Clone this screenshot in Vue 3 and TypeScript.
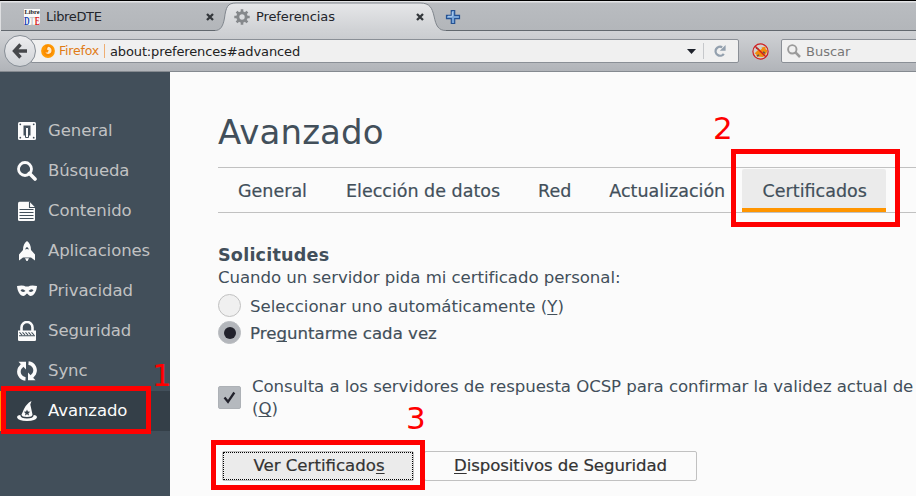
<script setup lang="ts">
import { ref } from 'vue'

interface Category {
  id: string
  label: string
}

const categories: Category[] = [
  { id: 'general', label: 'General' },
  { id: 'search', label: 'Búsqueda' },
  { id: 'content', label: 'Contenido' },
  { id: 'apps', label: 'Aplicaciones' },
  { id: 'privacy', label: 'Privacidad' },
  { id: 'security', label: 'Seguridad' },
  { id: 'sync', label: 'Sync' },
  { id: 'advanced', label: 'Avanzado' },
]
const tabs: string[] = ['General', 'Elección de datos', 'Red', 'Actualización', 'Certificados']

const category = ref('advanced')
const tab = ref('Certificados')
const request = ref<'auto' | 'ask'>('ask')
const ocsp = ref(true)
</script>

<template>
  <div class="window">
    <header class="tabstrip">
      <div class="btab btab-first">
        <svg class="favicon" width="16" height="16" viewBox="0 0 16 16">
          <rect width="16" height="16" fill="#fafafa" />
          <text x="0.5" y="5.2" font-size="5.5" font-weight="bold" textLength="15" lengthAdjust="spacingAndGlyphs" fill="#222" font-family="Liberation Serif, serif">Libre</text>
          <text x="0" y="15.600" font-size="11.500" font-weight="bold" textLength="16" lengthAdjust="spacingAndGlyphs" font-family="Liberation Serif, serif"><tspan fill="#1c46b4">D</tspan><tspan fill="#c8c8c8">T</tspan><tspan fill="#d92424">E</tspan></text>
        </svg>
        <span class="btab-title title-libre">LibreDTE</span>
        <svg class="close" width="8" height="8" viewBox="0 0 8 8"><path d="M1 1L7 7M7 1L1 7" stroke="#33373b" stroke-width="2.3" /></svg>
      </div>
      <div class="btab btab-active">
        <svg class="tab-shape" width="236" height="30" viewBox="0 0 236 30">
          <defs>
            <linearGradient id="tabfill" x1="0" y1="0" x2="0" y2="1">
              <stop offset="0" stop-color="#e6e7e9" />
              <stop offset="1" stop-color="#cfd1d4" />
            </linearGradient>
          </defs>
          <path d="M0 30V29.500C5 29.500 8 26 9.500 17C11 6 12.500 2 21 2H205C215 2 217 7 219 15C221 25 223.500 29.500 231 29.500V30Z" fill="url(#tabfill)" />
          <path d="M0 29.500C5 29.500 8 26 9.500 17C11 6 12.500 2 21 2H205C215 2 217 7 219 15C221 25 223.500 29.500 231 29.500" fill="none" stroke="#80868d" />
        </svg>
        <svg class="gear" width="16" height="16" viewBox="0 0 16 16">
          <circle cx="8" cy="8" r="4.200" fill="none" stroke="#85888b" stroke-width="3" />
          <g stroke="#85888b" stroke-width="2.600"><path d="M8 .3V3M8 13V15.700M.3 8H3M13 8H15.700M2.600 2.600L4.500 4.500M11.500 11.500L13.400 13.400M13.400 2.600L11.500 4.500M4.500 11.500L2.600 13.400" /></g>
        </svg>
        <span class="btab-title title-pref">Preferencias</span>
        <svg class="close" width="8" height="8" viewBox="0 0 8 8"><path d="M1 1L7 7M7 1L1 7" stroke="#33373b" stroke-width="2.3" /></svg>
      </div>
      <svg class="newtab" width="16" height="16" viewBox="0 0 16 16"><path d="M6.300 1.500H9.700V6.300H14.500V9.700H9.700V14.500H6.300V9.700H1.500V6.300H6.300Z" fill="#78a5d8" stroke="#255293" stroke-width="1.200" /><path d="M7.300 3V7.300H3" fill="none" stroke="#b5d0ee" /></svg>
    </header>

    <nav class="toolbar">
      <button class="back" aria-label="Atrás">
        <svg width="16" height="16" viewBox="0 0 16 16"><path d="M8.500 1.500L2.500 8L8.500 14.500M3 8H15" fill="none" stroke="#46484b" stroke-width="3.400" /></svg>
      </button>
      <div class="urlbar">
        <svg class="fox" width="14" height="14" viewBox="0 0 14 14">
          <circle cx="7" cy="7" r="6.900" fill="#ff9a05" />
          <path d="M4 1.500C7 .5 11.500 2 12 6.500C12.300 10 9.500 12.300 6.500 12C3.500 11.700 2 9 2.500 6C4 6 5.500 5.500 5 3.500Z" fill="#f98b00" />
          <path d="M7 2.700C10 3 11 5.500 10.300 7.800C9.500 10.300 6 10.700 4.300 8.600L6.700 8.400L7.700 6.300L5.800 5.500Z" fill="#ffe9c7" />
        </svg>
        <span class="brand">Firefox</span>
        <span class="url">about:preferences#advanced</span>
        <svg class="drop" width="9" height="5" viewBox="0 0 9 5"><path d="M0 0H9L4.500 5Z" fill="#1e222b" /></svg>
        <span class="sep"></span>
        <svg class="reload" width="12" height="12" viewBox="0 0 12 12"><path d="M9.800 8.800A4.500 4.500 0 1 1 8.200 2.200" fill="none" stroke="#93a0ae" stroke-width="2.300" /><path d="M11.600 0V5.800H5.800Z" fill="#93a0ae" /></svg>
      </div>
      <svg class="noscript" width="17" height="17" viewBox="0 0 17 17">
        <circle cx="8.500" cy="8.500" r="7.500" fill="#d2d0cc" />
        <path d="M4.500 8.500L7 6L8.500 7L10 5.500L9.500 4.500L13.500 3.500L13.500 6L15.500 7.500L14 11L11 14L5 13.500L4 11L2.500 10.500Z" fill="#f28c0d" />
        <path d="M4 5L6.500 6M7 12L5 13M11 9L13 10" stroke="#65564a" stroke-width="1.400" />
        <circle cx="8.500" cy="8.500" r="7.600" fill="none" stroke="#cf1d20" stroke-width="1.200" />
        <path d="M3.200 3.200L13.800 13.800" stroke="#cf1d20" stroke-width="1.400" />
      </svg>
      <div class="searchbar">
        <svg width="14" height="14" viewBox="0 0 14 14"><circle cx="5.300" cy="5.300" r="4.200" fill="none" stroke="#9b9b9b" stroke-width="1.900" /><path d="M8.200 8.200L13 13" stroke="#9b9b9b" stroke-width="2.500" /></svg>
        <span>Buscar</span>
      </div>
    </nav>

    <div class="body">
      <aside class="sidebar">
        <div v-for="c in categories" :key="c.id" class="cat" :class="{ selected: c.id === category }" @click="category = c.id">
          <svg class="cat-icon" width="20" height="20" viewBox="0 0 20 20" fill="#fbfbfb">
            <template v-if="c.id === 'general'">
              <rect x="1" y="1" width="18" height="18" rx="1.500" />
              <path d="M6.500 4.500H13.500V14.500H6.500Z" fill="#424f5a" />
              <path d="M8.500 6.500H11.500V16.500H8.500Z" stroke="#424f5a" stroke-width="1" />
              <g fill="#424f5a"><circle cx="3.300" cy="3.300" r=".9" /><circle cx="16.700" cy="3.300" r=".9" /><circle cx="3.300" cy="16.700" r=".9" /><circle cx="16.700" cy="16.700" r=".9" /></g>
            </template>
            <template v-else-if="c.id === 'search'">
              <circle cx="8" cy="8" r="6.500" fill="none" stroke="#fbfbfb" stroke-width="2.800" />
              <path d="M12.300 12.300L18 18" stroke="#fbfbfb" stroke-width="3.600" stroke-linecap="round" />
            </template>
            <template v-else-if="c.id === 'content'">
              <path d="M2.500 .7H12.500L18 6.200V18.500Q18 20 16.500 20H2.500Q1 20 1 18.500V2.200Q1 .7 2.500 .7Z" />
              <path d="M12.500 1V6.500H18M2.500 8.500H16.500M2.500 11.500H16.500M2.500 14.500H16.500M2.500 17.500H16.500" fill="none" stroke="#424f5a" stroke-width="1.100" />
            </template>
            <template v-else-if="c.id === 'apps'">
              <path d="M10 0C12.500 1.500 14 5 14 9L18 13.500V19.500L14 16.500H6L2 19.500V13.500L6 9C6 5 7.500 1.500 10 0Z" />
              <path d="M8 17.300H12L10 21Z" />
              <path d="M8 8.500Q10 3.500 12 8.500Q10 7.500 8 8.500Z" fill="#424f5a" />
            </template>
            <template v-else-if="c.id === 'privacy'">
              <path d="M0 5Q4 4 7 4.700Q10 6.500 13 4.700Q16 4 20 5C19.500 10.500 17 15 13.500 15C11.500 15 11 12.500 10 12.500C9 12.500 8.500 15 6.500 15C3 15 .5 10.500 0 5Z" />
              <path d="M3.500 9.500Q5.500 7 8.500 10Q5.500 12 3.500 9.500ZM16.500 9.500Q14.500 7 11.500 10Q14.500 12 16.500 9.500Z" fill="#424f5a" />
            </template>
            <template v-else-if="c.id === 'security'">
              <path d="M4.500 10V6.500A5.500 5.500 0 0 1 15.500 6.500V10" fill="none" stroke="#fbfbfb" stroke-width="2.600" />
              <path d="M1 9.500H19V18.700Q19 20 17.700 20H2.300Q1 20 1 18.700Z" />
              <path d="M2.500 11.300L5 14M5.500 11.300L8 14M8.500 11.300L11 14M11.500 11.300L14 14M14.500 11.300L17 14M2 14.700H18" stroke="#424f5a" stroke-width="1.100" />
            </template>
            <template v-else-if="c.id === 'sync'">
              <path d="M8.500 18C3 17.500 .5 11.500 2.800 7.200L5.500 4" fill="none" stroke="#fbfbfb" stroke-width="3.600" />
              <path d="M1.500 .8H9V8.500Z" />
              <path d="M11.500 2C17 2.500 19.500 8.500 17.200 12.800L14.500 16" fill="none" stroke="#fbfbfb" stroke-width="3.600" />
              <path d="M18.500 19.200H11V11.500Z" />
            </template>
            <template v-else>
              <path d="M14.500 0L13.300 3.500L15.500 13.500Q15.600 16 10 16Q4.500 16 4.500 13.500C6.500 10.500 7 4 14.500 0Z" />
              <path d="M3.300 14Q3.500 17.500 10 17.500Q16.500 17.500 16.700 14Q20 14.500 20 16.200Q19 20 10 20Q1 20 0 16.200Q0 14.500 3.300 14Z" />
              <path d="M10 8.500L10.900 10.600L13.200 10.800L11.500 12.300L12 14.500L10 13.300L8 14.500L8.500 12.300L6.800 10.800L9.100 10.600Z" fill="#343f48" />
            </template>
          </svg>
          <span>{{ c.label }}</span>
        </div>
      </aside>

      <main class="pane">
        <h1>Avanzado</h1>
        <div class="tabs">
          <button v-for="t in tabs" :key="t" class="tab" :class="{ on: t === tab }" @click="tab = t">{{ t }}</button>
        </div>
        <h2>Solicitudes</h2>
        <p class="desc">Cuando un servidor pida mi certificado personal:</p>
        <div class="radio-row" @click="request = 'auto'">
          <span class="radio" :class="{ checked: request === 'auto' }"></span>
          <span class="auto-label">Seleccionar uno automáticamente (<u>Y</u>)</span>
        </div>
        <div class="radio-row" @click="request = 'ask'">
          <span class="radio" :class="{ checked: request === 'ask' }"></span>
          <span class="ask-label">Pre<u>g</u>untarme cada vez</span>
        </div>
        <div class="check-row" @click="ocsp = !ocsp">
          <span class="check"><svg v-if="ocsp" width="13" height="13" viewBox="0 0 13 13"><path d="M1.500 6.500L5 10.800L11.300 1.500" fill="none" stroke="#22222c" stroke-width="2.300" /></svg></span>
          <span class="check-label">Consulta a los servidores de respuesta OCSP para confirmar la validez actual de<br />(<u>Q</u>)</span>
        </div>
        <div class="buttons">
          <button class="btn focused">Ver Certificado<u>s</u></button>
          <button class="btn devices"><u>D</u>ispositivos de Seguridad</button>
        </div>
      </main>
    </div>

    <div class="box box-1"></div>
    <div class="box box-2"></div>
    <div class="box box-3"></div>
    <span class="num num-1">1</span>
    <span class="num num-2">2</span>
    <span class="num num-3">3</span>
  </div>
</template>

<style>
body { margin: 0; overflow: hidden; }
</style>

<style scoped>
.window {
  position: relative;
  width: 916px;
  height: 496px;
  overflow: hidden;
  display: flex;
  flex-direction: column;
  background: #fbfbfb;
  font-family: "DejaVu Sans", sans-serif;
  color: #424f5a;
}
.window * { box-sizing: border-box; }
svg { display: block; flex: none; }
button { font: inherit; color: inherit; margin: 0; padding: 0; border: 0; background: none; }
span, .tab, .btn, p { white-space: nowrap; }
u { text-underline-offset: 2px; text-decoration-thickness: 1px; text-decoration-skip-ink: none; }

.tabstrip {
  display: flex;
  flex: none;
  height: 31px;
  border-top: 1px solid #000;
  border-bottom: 1px solid #62686e;
  background: linear-gradient(#e4e5e7 0 1px, #b9bcc0 2px, #b3b6ba 100%);
}
.btab { display: flex; align-items: center; height: 30px; font-size: 13px; color: #22252b; }
.btab-first { width: 218px; padding: 1px 4px 0 23px; border-left: 1px solid #dedfe1; }
.favicon { overflow: visible; }
.btab .close { margin-left: auto; }
.btab-title { margin-left: 6px; }
.title-libre { letter-spacing: -0.35px; }
.title-pref { letter-spacing: -0.1px; }
.btab-active { position: relative; width: 216px; padding: 1px 10px 0 16px; }
.tab-shape { position: absolute; left: -3px; top: 0; }
.gear, .title-pref, .btab-active .close { position: relative; }
.newtab { margin: 8px 0 0 11px; }

.toolbar {
  display: flex;
  flex: none;
  align-items: center;
  height: 41px;
  padding-left: 4px;
  border-bottom: 1px solid #858a90;
  background: linear-gradient(#d0d2d5, #b1b4b9);
}
.back {
  position: relative;
  display: flex;
  align-items: center;
  justify-content: center;
  width: 32px;
  height: 32px;
  flex: none;
  border: 1px solid #878e96;
  border-radius: 50%;
  background: linear-gradient(#ededef, #d0d3d7);
}
.urlbar {
  display: flex;
  flex: none;
  align-items: center;
  width: 708px;
  height: 24px;
  margin-left: -5px;
  padding-left: 9px;
  border: 1px solid #8a8f96;
  border-radius: 0 2px 2px 0;
  background: #f0f0f0;
  font-size: 13px;
  color: #222;
}
.brand { margin-left: 4px; padding-right: 5px; line-height: 14px; color: #e07c16; border-right: 1px solid #efae72; letter-spacing: -0.2px; font-size: 12.500px; }
.url { margin-left: 5px; letter-spacing: -0.13px; }
.drop { margin-left: auto; }
.sep { width: 1px; height: 16px; margin: 0 10px 0 7px; background: #c6c8cb; }
.reload { margin-right: 12px; }
.noscript { margin-left: 13px; }
.searchbar {
  display: flex;
  align-items: center;
  width: 150px;
  height: 24px;
  margin-left: 12px;
  padding-left: 5px;
  gap: 5px;
  flex: none;
  border: 1px solid #8a8f96;
  border-radius: 2px;
  background: #f0f0f0;
  font-size: 13px;
  color: #777;
}

.body { display: flex; flex: 1; min-height: 0; }
.sidebar { width: 170px; flex: none; padding-top: 39px; background: #424f5a; font-size: 16.500px; color: #c1c2c3; }
.cat { display: flex; align-items: center; height: 40px; padding-left: 16px; border-left: 1px solid transparent; line-height: 20px; }
.cat span { margin-left: 11px; letter-spacing: -0.08px; }
.cat-icon { margin-top: -1px; }
.cat.selected { background: #343f48; border-left-color: #ff9500; color: #fbfbfb; }

.pane { flex: 1; min-width: 0; padding: 37px 0 0 48px; font-size: 16.600px; }
h1 { margin: 0; height: 58px; font-size: 34px; line-height: 46px; font-weight: 400; letter-spacing: 0.1px; }
.tabs { display: flex; height: 46px; border-top: 1px solid #c1c1c1; border-bottom: 1px solid #c1c1c1; font-size: 17.500px; letter-spacing: -0.1px; -webkit-text-stroke: 0.2px currentColor; }
.tab { padding: 1px 19px 0 20px; }
.tab:nth-child(3), .tab:nth-child(4) { padding-left: 19px; }
.tab.on { width: 144px; margin-top: 1px; margin-left: -2px; padding: 4px 0 0 1px; background: #ebebeb; border-bottom: 4px solid #ff9500; border-radius: 2px 2px 0 0; }
h2 { margin: 30px 0 0; font-size: 17.600px; line-height: 24px; letter-spacing: 0.2px; }
.desc { margin: 0; line-height: 22px; letter-spacing: -0.06px; }
.radio-row { display: flex; align-items: center; height: 27px; }
.radio-row > span + span { margin-top: 2px; }
.desc + .radio-row { margin-top: 3px; }
.radio { display: flex; flex: none; align-items: center; justify-content: center; width: 23px; height: 23px; margin-right: 9px; border: 1px solid #c1c1c1; border-radius: 50%; background: #f0f0f0; }
.radio.checked { background: #b3b6bb; border-color: #b9bcc0; }
.radio.checked::after { content: ""; width: 12px; height: 12px; border-radius: 50%; background: #22222c; }
.ask-label, .btn { -webkit-text-stroke: 0.2px currentColor; }
.check-row { display: flex; align-items: center; height: 46px; margin-top: 28px; }
.check { display: flex; flex: none; align-items: center; justify-content: center; width: 23px; height: 23px; margin: 0 11px 0 0; border: 1px solid #adb1b6; border-radius: 2px; background: #b5b9be; }
.check-label { line-height: 22px; margin-top: 2px; letter-spacing: -0.065px; }
.buttons { display: flex; margin-top: 31px; gap: 10px; color: #333; }
.btn { height: 30px; padding-bottom: 2px; border: 1px solid #c1c1c1; border-radius: 2px; }
.focused { width: 192px; margin-left: 4px; padding-left: 2px; background: #ebebeb; outline: 1px dotted #000; outline-offset: -2px; }
.devices { width: 273px; letter-spacing: -0.1px; }

.box { position: absolute; border: 5px solid #f00; }
.box-1 { left: 1px; top: 386px; width: 150px; height: 48px; }
.box-2 { left: 731px; top: 149px; width: 169px; height: 78px; }
.box-3 { left: 211px; top: 440px; width: 214px; height: 50px; }
.num { position: absolute; color: #f00; font-size: 31px; line-height: 36px; }
.num-1 { left: 152px; top: 357px; }
.num-2 { left: 713px; top: 110px; }
.num-3 { left: 406px; top: 400px; }
</style>
